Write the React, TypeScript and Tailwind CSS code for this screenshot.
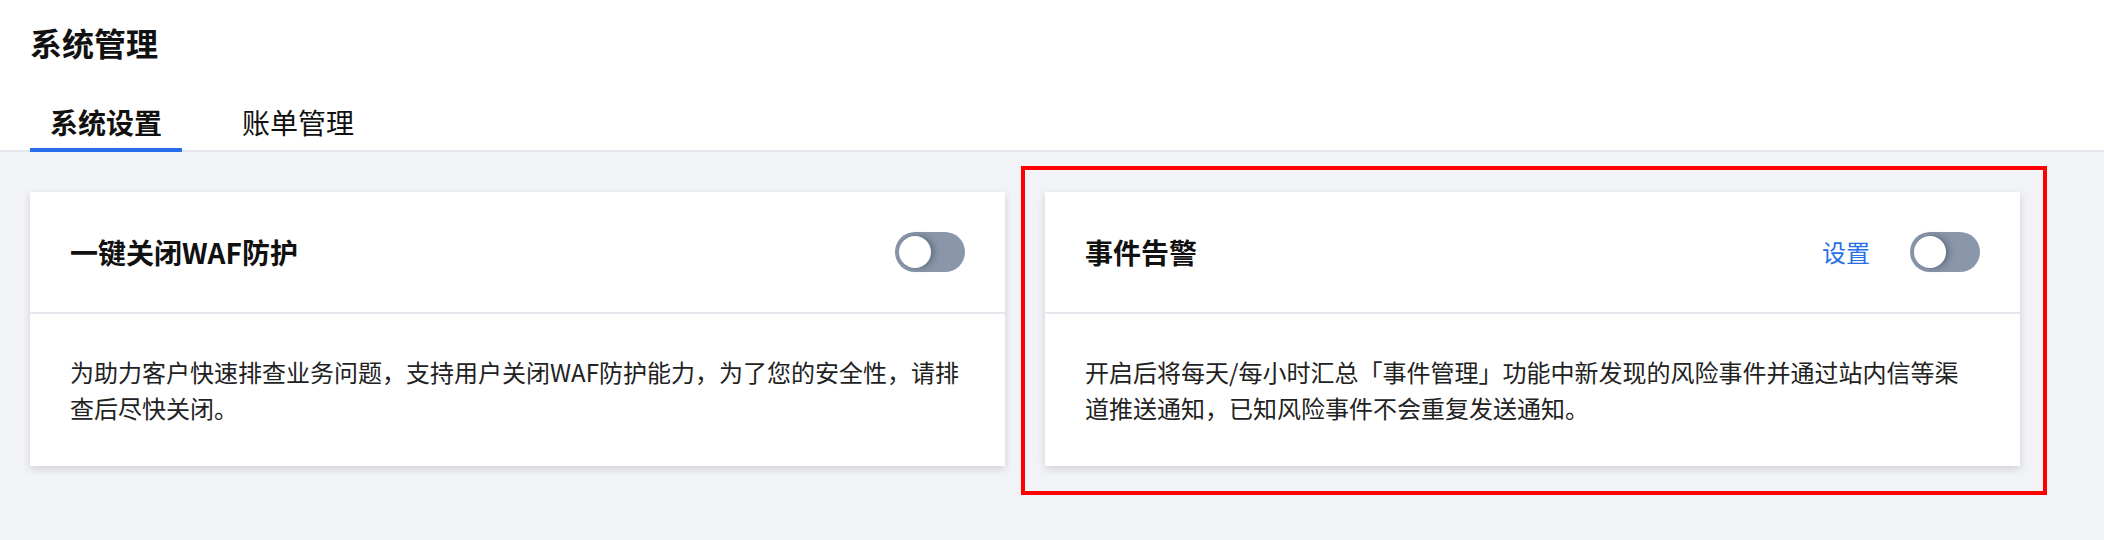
import React from "react";

const font = { fontFamily: '"Noto Sans CJK SC", "Noto Sans", sans-serif' };

function Toggle() {
  return (
    <div className="relative h-[40px] w-[70px] shrink-0 rounded-full bg-[#8a97aa]">
      <div className="absolute left-[4px] top-[4px] h-[32px] w-[32px] rounded-full bg-white shadow-[3px_0_6px_rgba(40,50,70,0.45)]" />
    </div>
  );
}

function Card({
  title,
  lines,
  link,
}: {
  title: string;
  lines: string[];
  link?: string;
}) {
  return (
    <div className="w-[975px] shrink-0 bg-white shadow-[0_3px_8px_rgba(0,0,0,0.14)]">
      <div className="flex h-[122px] items-center justify-between border-b-2 border-[#e7e8ee] px-[40px]">
        <div className="text-[28px] font-bold leading-[40px] text-[#111]">{title}</div>
        <div className="flex items-center gap-[40px]">
          {link && (
            <span className="text-[24px] leading-[36px] text-[#266fe8]">{link}</span>
          )}
          <Toggle />
        </div>
      </div>
      <div className="px-[40px] py-[40px] text-[24px] leading-[36px] text-[#222]">
        {lines.map((l, i) => (
          <div key={i} className="whitespace-nowrap">
            {l}
          </div>
        ))}
      </div>
    </div>
  );
}

export default function App() {
  return (
    <div style={font} className="h-[540px] w-[2104px] overflow-hidden bg-[#f2f3f7]">
      <div className="border-b-2 border-[#e6e8ee] bg-white pl-[30px] pt-[18px]">
        <div className="text-[32px] font-bold leading-[48px] text-[#111]">系统管理</div>
        <div className="mt-[28px] flex gap-[40px]">
          <div className="relative flex h-[56px] items-center px-[20px] text-[28px] font-bold text-[#111]">
            系统设置
            <span className="absolute bottom-[-2px] left-0 right-0 h-[4px] bg-[#2a6ef0]" />
          </div>
          <div className="flex h-[56px] items-center px-[20px] text-[28px] text-[#111]">
            账单管理
          </div>
        </div>
      </div>
      <div className="flex gap-[40px] pl-[30px] pt-[40px]">
        <Card
          title="一键关闭WAF防护"
          lines={[
            "为助力客户快速排查业务问题，支持用户关闭WAF防护能力，为了您的安全性，请排",
            "查后尽快关闭。",
          ]}
        />
        <div className="relative">
          <Card
            title="事件告警"
            link="设置"
            lines={[
              "开启后将每天/每小时汇总「事件管理」功能中新发现的风险事件并通过站内信等渠",
              "道推送通知，已知风险事件不会重复发送通知。",
            ]}
          />
          <div className="pointer-events-none absolute -bottom-[29px] -left-[24px] -right-[27px] -top-[26px] border-4 border-[#ff0000]" />
        </div>
      </div>
    </div>
  );
}
